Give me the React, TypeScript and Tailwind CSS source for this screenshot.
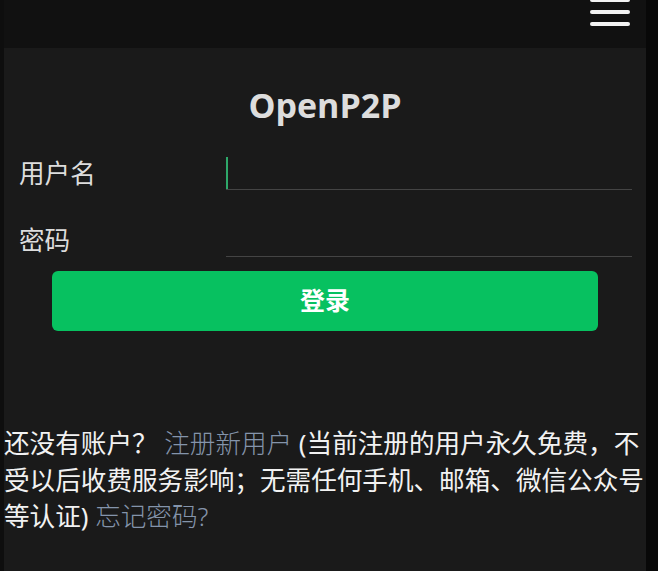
import React from "react";

const cjk = "font-['Noto_Sans','Noto_Sans_CJK_SC',sans-serif]";

const Field = ({ label, type, focused }: { label: string; type: string; focused?: boolean }) => (
  <div className="flex items-center h-[35px]">
    <label className="w-[207px] pt-[2px] text-[25.6px] leading-[35px] text-[#dddddd]">{label}</label>
    <div className="relative flex-1 h-[35px]">
      <input
        type={type}
        className="w-full h-full bg-transparent border-b border-[#444444] outline-none text-[#eeeeee] text-[22px]"
      />
      {focused && <span className="absolute left-0 top-[2px] w-[2px] h-[32px] bg-[#2ea86a]" />}
    </div>
  </div>
);

export default function App() {
  return (
    <div className={`flex min-h-[571px] bg-[#080808] ${cjk}`}>
      <div className="w-[4px] bg-[#0e0e0e]" />
      <div className="w-[642px] flex flex-col bg-[#1a1a1a]">
        {/* top bar */}
        <header className="h-[48px] bg-[#111111] flex justify-end pr-[16px]">
          <div className="flex flex-col gap-[8px] -mt-[2px]">
            <span className="block w-[40px] h-[4px] rounded-full bg-[#f2f2f2]" />
            <span className="block w-[40px] h-[4px] rounded-full bg-[#f2f2f2]" />
            <span className="block w-[40px] h-[4px] rounded-full bg-[#f2f2f2]" />
          </div>
        </header>

        <main className="flex flex-col pt-[37px]">
          <h1 className="text-center font-['Open_Sans',sans-serif] font-bold text-[34px] leading-[40px] text-[#dddddd]">
            OpenP2P
          </h1>

          <form className="flex flex-col pl-[15px] pr-[14px] mt-[30px] gap-[32px]">
            <Field label="用户名" type="text" focused />
            <Field label="密码" type="password" />
          </form>

          <div className="px-[48px] mt-[14px]">
            <button className="w-full h-[60px] rounded-[6px] bg-[#07c160] text-white font-bold text-[25px]">
              登录
            </button>
          </div>

          <p className="mt-[95px] text-[25.6px] leading-[36.5px] text-[#f2f2f2]">
            还没有账户？ <a className="text-[#8494ab] font-light">注册新用户</a> (当前注册的用户永久免费，不受以后收费服务影响；无需任何手机、邮箱、微信公众号等认证){" "}
            <a className="text-[#8494ab] font-light">忘记密码?</a>
          </p>
        </main>
      </div>
      <div className="w-[12px] bg-[#080808]" />
    </div>
  );
}
